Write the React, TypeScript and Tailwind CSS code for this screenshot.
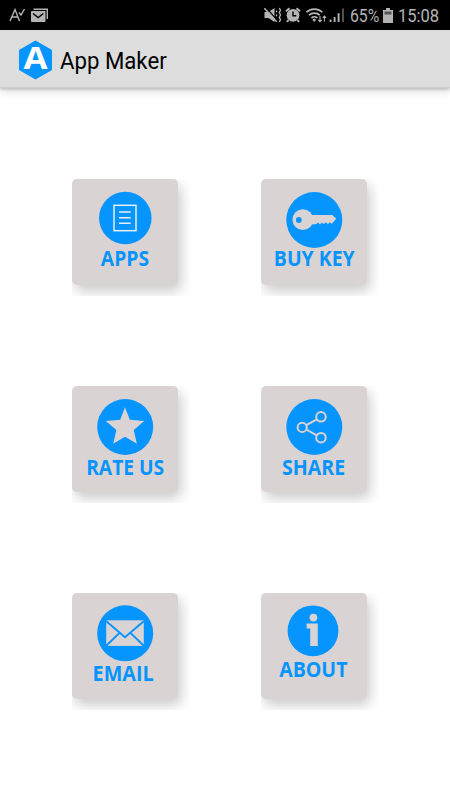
import type { ReactNode } from "react";

interface MenuItem {
  label: string;
  labelClass: string;
  icon: ReactNode;
}

const BLUE = "#0694ff";
const TILE = "#d9d3d3";

const menuItems: MenuItem[] = [
  {
    label: "APPS",
    labelClass: "mt-0 scale-x-[0.93]",
    icon: (
      <>
        <circle cx="53.3" cy="39" r="26.3" fill={BLUE} />
        <g fill="none" stroke="#e8eef4" strokeWidth="1.5">
          <rect x="42" y="26.3" width="22" height="25.4" />
          <path d="M47 33h11.7M47 38.7h11.7M47 44.3h11.7" />
        </g>
      </>
    ),
  },
  {
    label: "BUY KEY",
    labelClass: "mt-0 scale-x-[0.935]",
    icon: (
      <>
        <circle cx="53.3" cy="41" r="28" fill={BLUE} />
        <circle cx="41.9" cy="40.7" r="10.4" fill={TILE} />
        <path
          d="M49 36h22.3l3.9 3.8-4.4 5-2-1.6-1.9 2-1.9-2-2.4 1.8-1.8-1.6-1.8 2-2-2-2 1.8H49z"
          fill={TILE}
        />
        <circle cx="37.8" cy="41" r="2.9" fill={BLUE} />
      </>
    ),
  },
  {
    label: "RATE US",
    labelClass: "mt-[2px] scale-x-[0.925]",
    icon: (
      <>
        <circle cx="53.2" cy="41" r="28" fill={BLUE} />
        <path
          d="M53 21.2l4.8 12.5 14.4 1.3-10.5 9 3.2 13.8L53 50.7l-11.8 7.1L44.4 44l-10.6-9 14.4-1.3z"
          fill={TILE}
        />
      </>
    ),
  },
  {
    label: "SHARE",
    labelClass: "mt-[2px] scale-x-[0.94]",
    icon: (
      <>
        <circle cx="53.3" cy="41" r="28" fill={BLUE} />
        <g fill="none" stroke={TILE} strokeWidth="2">
          <circle cx="41.2" cy="41.4" r="4.6" />
          <circle cx="60" cy="30.8" r="4.8" />
          <circle cx="60" cy="51.7" r="4.8" />
          <path d="M45.3 39.2l10.5-5.9M45.3 43.5l10.5 5.9" />
        </g>
      </>
    ),
  },
  {
    label: "EMAIL",
    labelClass: "mt-[1px] mr-[3px] scale-x-[0.95]",
    icon: (
      <>
        <circle cx="53.2" cy="40.3" r="28" fill={BLUE} />
        <rect x="34.2" y="27.3" width="37.6" height="25.6" fill={TILE} />
        <path
          d="M34 28l19 16.2L72 28M34 53l13-12.6M72 53L59 40.4"
          fill="none"
          stroke={BLUE}
          strokeWidth="1.9"
        />
      </>
    ),
  },
  {
    label: "ABOUT",
    labelClass: "-mt-[3px] mr-[1px] scale-x-[0.94]",
    icon: (
      <>
        <circle cx="52" cy="37.8" r="25.4" fill={BLUE} />
        <circle cx="52.4" cy="24.6" r="3.9" fill={TILE} />
        <path d="M45.6 30.6h11.2V53h-7.6V35.6h-3.6z" fill={TILE} />
      </>
    ),
  },
];

function StatusBar() {
  return (
    <div className="flex h-[30px] items-center bg-black pl-[9px] text-[#b4b4b4]">
      {/* Notifications */}
      <svg width="40" height="16" viewBox="0 0 40 16" className="shrink-0">
        <g fill="none" stroke="currentColor" strokeWidth="1.4">
          <path d="M1 14L6 2.5 10.5 14M3 10h6.3M10 5.5l2 2.5L15.5 2" />
          <path d="M24.5 2.2h13.8V12" />
        </g>
        <rect x="22" y="4" width="14.5" height="11" rx="0.8" fill="currentColor" />
        <path d="M24 6.5l5.2 4 5.2-4" fill="none" stroke="#000" strokeWidth="1.4" />
      </svg>

      {/* System icons */}
      <div className="ml-[215px] flex items-center">
        <svg width="82" height="16" viewBox="0 0 82 16" className="shrink-0">
          <path d="M.5 5h4L10.5 1v14l-6-4h-4z" fill="currentColor" />
          <path d="M1.5 0l12 13.5" stroke="#000" strokeWidth="1.2" />
          <path d="M.3 1.2l12.4 13.6" stroke="currentColor" strokeWidth="1.6" />
          <path
            d="M12.5 3.5v1.8M12.5 7.5v1.8M15.3 1l1.2 2.3-1.2 2.3L16.5 8l-1.2 2.4 1.2 2.3-1.2 2.3"
            fill="none"
            stroke="currentColor"
            strokeWidth="1.3"
          />
          <circle cx="29" cy="8.3" r="6.4" fill="currentColor" />
          <path
            d="M22 4.3l3.5-3M36 4.3l-3.5-3M24.5 13l-1.5 2M33.5 13l1.5 2"
            stroke="currentColor"
            strokeWidth="2"
          />
          <path d="M29 4.5v4.2h3.3" fill="none" stroke="#000" strokeWidth="1.4" />
          <path
            d="M42.5 5.2c4.4-4.2 11.4-4.2 15.8 0M45 8.2c3-2.8 7.8-2.8 10.8 0M47.5 11c1.6-1.5 4.2-1.5 5.8 0"
            fill="none"
            stroke="currentColor"
            strokeWidth="1.8"
          />
          <circle cx="50.2" cy="13" r="1.5" fill="currentColor" />
          <path
            d="M56 9v5.5M54.3 12.8l1.7 1.9 1.7-1.9M60.4 14.5V9M58.7 10.8L60.4 9l1.7 1.8"
            fill="none"
            stroke="currentColor"
            strokeWidth="1.1"
          />
          <path
            d="M66.6 15v-2.5M70.6 15v-5M74.6 15V6.2"
            stroke="currentColor"
            strokeWidth="1.9"
          />
          <path d="M79 15V1.5" stroke="#555" strokeWidth="1.9" />
        </svg>
        <span className="mt-px ml-1 w-[30px] origin-left scale-x-[0.83] text-[19px] leading-none">
          65%
        </span>
        <svg width="10" height="15" viewBox="0 0 10 15" className="ml-[3px] shrink-0">
          <path d="M3 0h4v2h3v13H0V2h3z" fill="currentColor" />
          <rect x="1.5" y="3.5" width="7" height="3" fill="#555" />
        </svg>
        <span className="mt-px ml-[5px] origin-left scale-x-[0.87] text-[19px] leading-none">
          15:08
        </span>
      </div>
    </div>
  );
}

function TitleBar() {
  return (
    <header className="flex h-[58px] items-center border-b border-[#cfcfcf] bg-[#dddddd] pl-[18px] shadow-[0_2px_2px_rgba(0,0,0,0.14),0_4px_8px_rgba(0,0,0,0.12)]">
      <svg width="35" height="40" viewBox="0 0 35 40" className="mt-[2px] shrink-0">
        <path d="M17.5.5L34 10v20L17.5 39.5 1 30V10z" fill={BLUE} />
        <text
          x="17.5"
          y="28.8"
          textAnchor="middle"
          textLength="24"
          lengthAdjust="spacingAndGlyphs"
          fill="#fff"
          className="font-['Liberation_Mono',monospace] text-[34px] font-bold"
        >
          A
        </text>
      </svg>
      <h1 className="mt-[5px] ml-[7px] origin-left scale-x-[0.965] text-[23px] leading-none text-black">
        App Maker
      </h1>
    </header>
  );
}

function MenuTile({ item }: { item: MenuItem }) {
  return (
    <div className="h-[117px] w-[118px] overflow-hidden">
      <button className="flex h-[106px] w-[106px] flex-col items-center rounded-[5px] bg-[#d9d3d3] shadow-[3px_6px_13px_rgba(0,0,0,0.21)]">
        <svg width="106" height="69" viewBox="0 0 106 69" overflow="visible" className="shrink-0">
          {item.icon}
        </svg>
        <span
          className={`font-['Open_Sans',sans-serif] text-[20.8px] leading-[20px] font-bold whitespace-nowrap text-[#0694ff] ${item.labelClass}`}
        >
          {item.label}
        </span>
      </button>
    </div>
  );
}

export default function App() {
  return (
    <div className="h-[800px] w-[450px] overflow-hidden bg-white font-[Roboto,sans-serif]">
      <StatusBar />
      <TitleBar />
      <main className="grid grid-cols-[118px_118px] gap-x-[71px] gap-y-[90px] pt-[91px] pl-[72px]">
        {menuItems.map((item) => (
          <MenuTile key={item.label} item={item} />
        ))}
      </main>
    </div>
  );
}
